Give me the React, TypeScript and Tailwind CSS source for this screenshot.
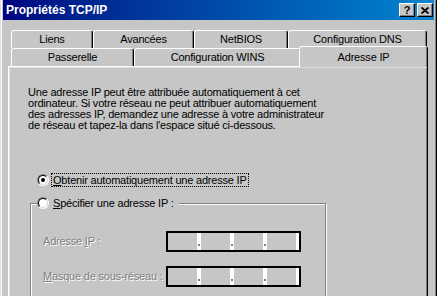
import { Fragment } from "react";

function Radio({ checked }: { checked?: boolean }) {
  return (
    <div className="h-[12px] w-[12px] shrink-0 rounded-full border border-t-[#808080] border-l-[#808080] border-b-white border-r-white">
      <div className="flex h-full w-full items-center justify-center rounded-full border border-t-black border-l-black border-b-[#dfdfdf] border-r-[#dfdfdf] bg-white">
        {checked && <div className="h-[4px] w-[4px] rounded-full bg-black" />}
      </div>
    </div>
  );
}

function Tab({ label, className }: { label: string; className: string }) {
  return (
    <div
      className={
        "flex h-[18px] items-center justify-center rounded-t-[3px] border-t border-l border-r border-t-white border-l-white border-r-black bg-[#c6c6c6] pb-[1px] shadow-[inset_-1px_0_0_#808080] " +
        className
      }
    >
      {label}
    </div>
  );
}

function IpField() {
  return (
    <div className="flex h-[21px] w-[135px] border-2 border-black bg-white">
      {[0, 1, 2, 3].map((i) => (
        <Fragment key={i}>
          <div className="w-[29px] bg-[#c6c6c6]" />
          {i < 3 && (
            <div className="flex w-[4px] items-end pb-[4px] pl-[1px]">
              <div className="h-[2px] w-[2px] bg-[#808080]" />
            </div>
          )}
        </Fragment>
      ))}
    </div>
  );
}

export default function App() {
  return (
    <div className="h-[296px] w-[437px] overflow-hidden border-l border-r border-l-[#dfdfdf] border-r-black bg-[#c6c6c6] font-[family-name:Liberation_Sans,Arial,sans-serif] text-[11px] tracking-[-0.2px] text-black">
      <div className="flex h-full flex-col border-l border-r border-l-white border-r-[#808080] px-[1px]">
        {/* title bar */}
        <div className="flex h-[20px] shrink-0 items-center justify-between bg-linear-to-r from-[#000080] to-[#1084d0] pl-[3px] pr-[1px]">
          <span className="text-[12px] font-bold tracking-normal text-white">Propriétés TCP/IP</span>
          <div className="flex gap-[2px]">
            <div className="flex h-[14px] w-[16px] items-center justify-center border border-t-white border-l-white border-b-black border-r-black bg-[#c6c6c6] shadow-[inset_-1px_-1px_0_#808080]">
              <span className="text-[11px] font-bold leading-none">?</span>
            </div>
            <div className="flex h-[14px] w-[16px] items-center justify-center border border-t-white border-l-white border-b-black border-r-black bg-[#c6c6c6] shadow-[inset_-1px_-1px_0_#808080]">
              <svg width="8" height="7" viewBox="0 0 8 7">
                <path d="M0.5 0.5 L7.5 6.5 M7.5 0.5 L0.5 6.5" stroke="black" strokeWidth="1.8" />
              </svg>
            </div>
          </div>
        </div>

        <div className="flex flex-1 flex-col pl-[5px] pr-[6px] pt-[10px]">
          {/* back row of tabs */}
          <div className="ml-[3px] flex">
            <Tab label="Liens" className="w-[82px]" />
            <Tab label="Avancées" className="w-[101px]" />
            <Tab label="NetBIOS" className="w-[94px]" />
            <Tab label="Configuration DNS" className="w-[139px]" />
          </div>
          {/* front row of tabs */}
          <div className="ml-[3px] flex h-[18px] items-start">
            <Tab label="Passerelle" className="w-[123px]" />
            <Tab label="Configuration WINS" className="w-[167px]" />
            <div className="relative z-10 -ml-[2px] -mt-[2px] flex h-[21px] w-[129px] justify-center rounded-t-[3px] border-t border-l border-r border-t-white border-l-white border-r-black bg-[#c6c6c6] pt-[2px] shadow-[inset_-1px_0_0_#808080]">
              Adresse IP
            </div>
          </div>

          {/* panel */}
          <div className="flex-1 border-t border-l border-r border-t-white border-l-white border-r-black bg-[#c6c6c6] shadow-[inset_1px_1px_0_#dfdfdf,inset_-1px_0_0_#808080]">
            <p className="ml-[19px] mt-[20px] leading-[11px]">
              Une adresse IP peut être attribuée automatiquement à cet
              <br />
              ordinateur. Si votre réseau ne peut attribuer automatiquement
              <br />
              des adresses IP, demandez une adresse à votre administrateur
              <br />
              de réseau et tapez-la dans l'espace situé ci-dessous.
            </p>

            <div className="ml-[28px] mt-[42px] flex h-[14px] items-center">
              <Radio checked />
              <span className="ml-[2px] border border-dotted border-black px-[1px] leading-[12px]">
                <span className="underline">O</span>btenir automatiquement une adresse IP
              </span>
            </div>

            <div className="ml-[21px] mt-[16px] w-[296px] border border-[#808080] pb-[30px] shadow-[inset_1px_1px_0_#fff,1px_1px_0_#fff]">
              <div className="-mt-[8px] ml-[6px] flex h-[14px] w-fit items-center bg-[#c6c6c6] pr-[3px]">
                <Radio />
                <span className="ml-[2px] border border-transparent px-[1px] leading-[12px]">
                  <span className="underline">S</span>pécifier une adresse IP :
                </span>
              </div>

              <div className="ml-[12px] mt-[21px] flex items-center">
                <span className="w-[123px] text-[#808080] [text-shadow:1px_1px_0_#fff]">
                  Adresse <span className="underline">I</span>P :
                </span>
                <IpField />
              </div>

              <div className="ml-[12px] mt-[14px] flex items-center">
                <span className="w-[123px] text-[#808080] [text-shadow:1px_1px_0_#fff]">
                  <span className="underline">M</span>asque de sous-réseau :
                </span>
                <IpField />
              </div>
            </div>
          </div>
        </div>
      </div>
    </div>
  );
}
